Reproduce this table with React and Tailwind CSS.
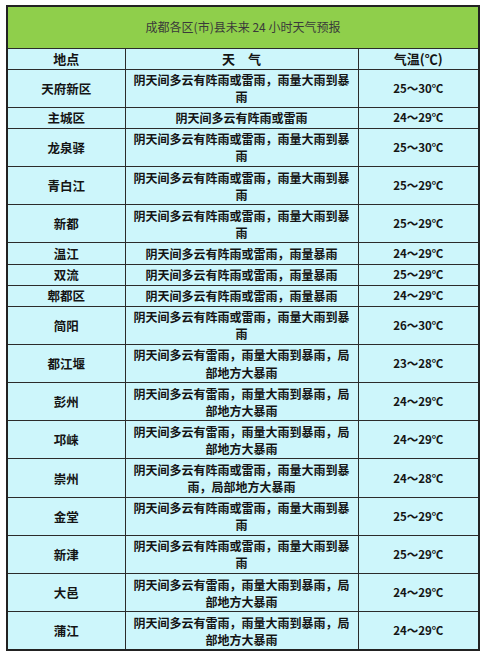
import React from "react";

const rows = [
  ["天府新区", "阴天间多云有阵雨或雷雨，雨量大雨到暴雨", "25～30℃"],
  ["主城区", "阴天间多云有阵雨或雷雨", "24～29℃"],
  ["龙泉驿", "阴天间多云有阵雨或雷雨，雨量大雨到暴雨", "25～30℃"],
  ["青白江", "阴天间多云有阵雨或雷雨，雨量大雨到暴雨", "25～29℃"],
  ["新都", "阴天间多云有阵雨或雷雨，雨量大雨到暴雨", "25～29℃"],
  ["温江", "阴天间多云有阵雨或雷雨，雨量暴雨", "24～29℃"],
  ["双流", "阴天间多云有阵雨或雷雨，雨量暴雨", "25～29℃"],
  ["郫都区", "阴天间多云有阵雨或雷雨，雨量暴雨", "24～29℃"],
  ["简阳", "阴天间多云有阵雨或雷雨，雨量大雨到暴雨", "26～30℃"],
  ["都江堰", "阴天间多云有雷雨，雨量大雨到暴雨，局部地方大暴雨", "23～28℃"],
  ["彭州", "阴天间多云有雷雨，雨量大雨到暴雨，局部地方大暴雨", "24～29℃"],
  ["邛崃", "阴天间多云有雷雨，雨量大雨到暴雨，局部地方大暴雨", "24～29℃"],
  ["崇州", "阴天间多云有阵雨或雷雨，雨量大雨到暴雨，局部地方大暴雨", "24～28℃"],
  ["金堂", "阴天间多云有阵雨或雷雨，雨量大雨到暴雨", "25～29℃"],
  ["新津", "阴天间多云有阵雨或雷雨，雨量大雨到暴雨", "25～29℃"],
  ["大邑", "阴天间多云有雷雨，雨量大雨到暴雨，局部地方大暴雨", "24～29℃"],
  ["蒲江", "阴天间多云有雷雨，雨量大雨到暴雨，局部地方大暴雨", "24～29℃"],
];

const cell = "border border-[#2b2b2b] bg-[#cdf6fb] text-center align-middle leading-[17.1px] py-[1.5px]";

const App = () => {
  return (
    <div className="min-h-screen bg-white pt-[5px] pl-[6px] font-['Noto_Sans_CJK_SC','Noto_Sans',sans-serif] text-[#141414]">
      <table className="w-[472px] table-fixed border-collapse border-2 border-[#222]">
        <colgroup>
          <col className="w-[118px]" />
          <col className="w-[233px]" />
          <col className="w-[121px]" />
        </colgroup>
        <tbody>
          <tr>
            <td colSpan={3} className="h-[42px] border border-[#2b2b2b] bg-[#8fcf4b] text-center text-[12px] text-[#3a3a3a]">
              成都各区(市)县未来 24 小时天气预报
            </td>
          </tr>
          <tr className="text-[13px] font-bold">
            <td className={cell}>地点</td>
            <td className={cell}>天　气</td>
            <td className={cell}>气温(℃)</td>
          </tr>
          {rows.map(([place, weather, temp]) => (
            <tr key={place}>
              <td className={`${cell} text-[12.5px] font-bold`}>{place}</td>
              <td className={`${cell} px-[7px] text-[12px] font-bold`}>{weather}</td>
              <td className={`${cell} text-[11.5px] font-bold`}>{temp}</td>
            </tr>
          ))}
        </tbody>
      </table>
    </div>
  );
};

export default App;
